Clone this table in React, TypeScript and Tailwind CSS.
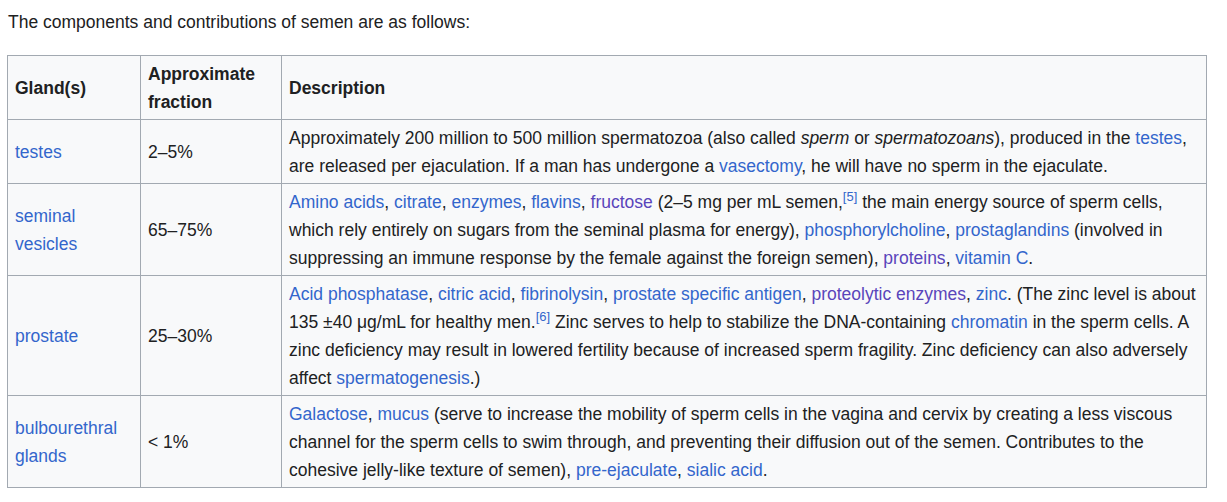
const A = ({ children, visited = false }: { children: React.ReactNode; visited?: boolean }) => (
  <a href="#" className={visited ? 'text-[#5a45bb]' : 'text-[#3366cc]'}>
    {children}
  </a>
);

const Ref = ({ n }: { n: number }) => (
  <sup className="text-[13px] leading-none whitespace-nowrap text-[#3366cc]">[{n}]</sup>
);

const th = 'border border-[#a2a9b1] px-[7px] py-[3.5px] text-left align-middle font-bold';
const td = 'border border-[#a2a9b1] px-[7px] py-[3.5px] align-middle';

const App = () => {
  return (
    <div className="min-h-screen bg-white pl-[7px] pt-[8px] font-['Liberation_Sans',Arial,sans-serif] text-[17.5px] leading-[28px] text-[#202122]">
      <p className="mb-[19px] pl-px">The components and contributions of semen are as follows:</p>
      <table className="w-[1200px] table-fixed border-collapse bg-[#f8f9fa]">
        <colgroup>
          <col className="w-[133px]" />
          <col className="w-[141px]" />
          <col />
        </colgroup>
        <thead>
          <tr>
            <th className={th}>Gland(s)</th>
            <th className={th}>
              Approximate
              <br />
              fraction
            </th>
            <th className={th}>Description</th>
          </tr>
        </thead>
        <tbody>
          <tr>
            <td className={td}>
              <A>testes</A>
            </td>
            <td className={td}>2–5%</td>
            <td className={td}>
              Approximately 200 million to 500 million spermatozoa (also called <i>sperm</i> or{' '}
              <i>spermatozoans</i>), produced in the <A>testes</A>, are released per ejaculation. If a man has
              undergone a <A>vasectomy</A>, he will have no sperm in the ejaculate.
            </td>
          </tr>
          <tr>
            <td className={td}>
              <A>
                seminal
                <br />
                vesicles
              </A>
            </td>
            <td className={td}>65–75%</td>
            <td className={td}>
              <A>Amino acids</A>, <A>citrate</A>, <A>enzymes</A>, <A>flavins</A>, <A visited>fructose</A> (2–5 mg
              per mL semen,
              <Ref n={5} /> the main energy source of sperm cells, which rely entirely on sugars from the seminal
              plasma for energy), <A>phosphorylcholine</A>, <A>prostaglandins</A> (involved in suppressing an
              immune response by the female against the foreign semen), <A visited>proteins</A>, <A>vitamin C</A>.
            </td>
          </tr>
          <tr>
            <td className={td}>
              <A>prostate</A>
            </td>
            <td className={td}>25–30%</td>
            <td className={td}>
              <A>Acid phosphatase</A>, <A>citric acid</A>, <A>fibrinolysin</A>, <A>prostate specific antigen</A>,{' '}
              <A visited>proteolytic enzymes</A>, <A>zinc</A>. (The zinc level is about 135 ±40 μg/mL for healthy
              men.
              <Ref n={6} /> Zinc serves to help to stabilize the DNA-containing <A>chromatin</A> in the sperm cells.
              A zinc deficiency may result in lowered fertility because of increased sperm fragility. Zinc
              deficiency can also adversely affect <A>spermatogenesis</A>.)
            </td>
          </tr>
          <tr>
            <td className={td}>
              <A>
                bulbourethral
                <br />
                glands
              </A>
            </td>
            <td className={td}>&lt; 1%</td>
            <td className={td}>
              <A>Galactose</A>, <A>mucus</A> (serve to increase the mobility of sperm cells in the vagina and
              cervix by creating a less viscous channel for the sperm cells to swim through, and preventing their
              diffusion out of the semen. Contributes to the cohesive jelly-like texture of semen),{' '}
              <A>pre-ejaculate</A>, <A>sialic acid</A>.
            </td>
          </tr>
        </tbody>
      </table>
    </div>
  );
};

export default App;
